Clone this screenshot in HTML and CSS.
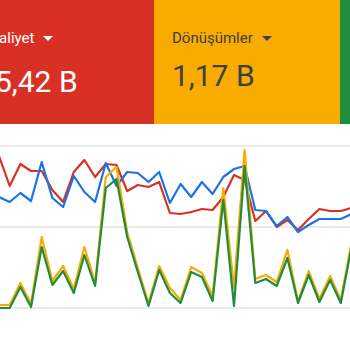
FILE: index.html
```html
<!DOCTYPE html>
<html lang="tr">
<head>
  <meta charset="UTF-8">
  <title>Kampanya özeti</title>
  <link rel="stylesheet" href="styles.css">
</head>
<body>
  <div class="cards">
    <div class="card card-red">
      <div class="card-title">Maliyet
        <svg class="drop" width="10" height="5" viewBox="0 0 10 5"><path d="M0 0l5 5 5-5z"/></svg>
      </div>
      <div class="card-value">5,42 B</div>
    </div>
    <div class="card card-yellow">
      <div class="card-title">Dönüşümler
        <svg class="drop" width="10" height="5" viewBox="0 0 10 5"><path d="M0 0l5 5 5-5z"/></svg>
      </div>
      <div class="card-value">1,17 B</div>
    </div>
    <div class="card card-green"></div>
  </div>

  <!-- chart -->
  <div class="chart">
    <svg width="350" height="226" viewBox="0 124 350 226">
      <g class="grid">
        <line x1="0" y1="146" x2="350" y2="146"/>
        <line x1="0" y1="227" x2="350" y2="227"/>
        <line x1="0" y1="308" x2="350" y2="308"/>
      </g>
      <polyline class="line line-red" points="-1,156 9.7,186 20.4,164 31,171 41.7,171 52.4,190 63.1,202 73.8,172 84.4,160 95.1,177 105.8,164 116.5,165 127.2,191 137.8,185 148.5,187 159.2,182 169.9,213 180.6,214 191.2,212 201.9,209 212.6,210 223.3,197 234,175 244.6,180 255.3,221 266,211 276.7,227 287.4,220 298,230 308.7,219 319.4,209 330.1,211 340.8,211 351.4,208"/>
      <polyline class="line line-blue" points="-1,197 9.7,202 20.4,193 31,201 41.7,162 52.4,198 63.1,207 73.8,176 84.4,192 95.1,202 105.8,163 116.5,186 127.2,172 137.8,173 148.5,182 159.2,172 169.9,203 180.6,184 191.2,197 201.9,182 212.6,194 223.3,177 234,169 244.6,166 255.3,210 266,211 276.7,226 287.4,217 298,232 308.7,225 319.4,219 330.1,219 340.8,219 351.4,214"/>
      <polyline class="line line-yellow" points="-1,305 9.7,305 20.4,283 31,304 41.7,237 52.4,281 63.1,266 73.8,289 84.4,247 95.1,283 105.8,177 116.5,167 127.2,232 137.8,268 148.5,303 159.2,266 169.9,288 180.6,300 191.2,267 201.9,273 212.6,296 223.3,188 234,288 244.6,150 255.3,279 266,275 276.7,282 287.4,250 298,301 308.7,271 319.4,299 330.1,276 340.8,300 351.4,243"/>
      <polyline class="line line-green" points="-1,308 9.7,308 20.4,287 31,307 41.7,247 52.4,285 63.1,271 73.8,293 84.4,255 95.1,286 105.8,188 116.5,179 127.2,237 137.8,272 148.5,306 159.2,270 169.9,293 180.6,303 191.2,272 201.9,277 212.6,301 223.3,200 234,306 244.6,166 255.3,283 266,279 276.7,286 287.4,258 298,303 308.7,275 319.4,302 330.1,280 340.8,303 351.4,248"/>
    </svg>
  </div>
</body>
</html>
```

FILE: styles.css
```css
body {
  margin: 0;
  width: 350px;
  height: 350px;
  overflow: hidden;
  background-color: #fff;
  font-family: Roboto, "Noto Sans", Arial, sans-serif;
}
.cards {
  display: flex;
  margin-left: -32px;
  height: 124px;
}
.card {
  flex-shrink: 0;
  width: 186px;
  box-sizing: border-box;
  padding: 28px 0 0 18px;
  color: #3c4043;
}
.card-red {
  background-color: #d93025;
  color: #fff;
}
.card-yellow {
  background-color: #f9ab00;
}
.card-green {
  background-color: #1e8e3e;
}
.card-title {
  display: flex;
  align-items: center;
  font-size: 15px;
  line-height: 20px;
  white-space: nowrap;
}
.drop {
  margin-left: 9px;
  fill: currentColor;
}
.card-value {
  margin-top: 10px;
  font-size: 30px;
  line-height: 36px;
  white-space: nowrap;
}
.card-red .card-value {
  margin: 16px 0 0 9px;
}
.chart svg {
  display: block;
}
.grid line {
  stroke: #e3e3e3;
  stroke-width: 1.5;
}
.line {
  fill: none;
  stroke-width: 2.2;
  stroke-linejoin: round;
}
.line-red {
  stroke: #d93025;
}
.line-blue {
  stroke: #1a73e8;
}
.line-yellow {
  stroke: #f9ab00;
}
.line-green {
  stroke: #1e8e3e;
}
```
